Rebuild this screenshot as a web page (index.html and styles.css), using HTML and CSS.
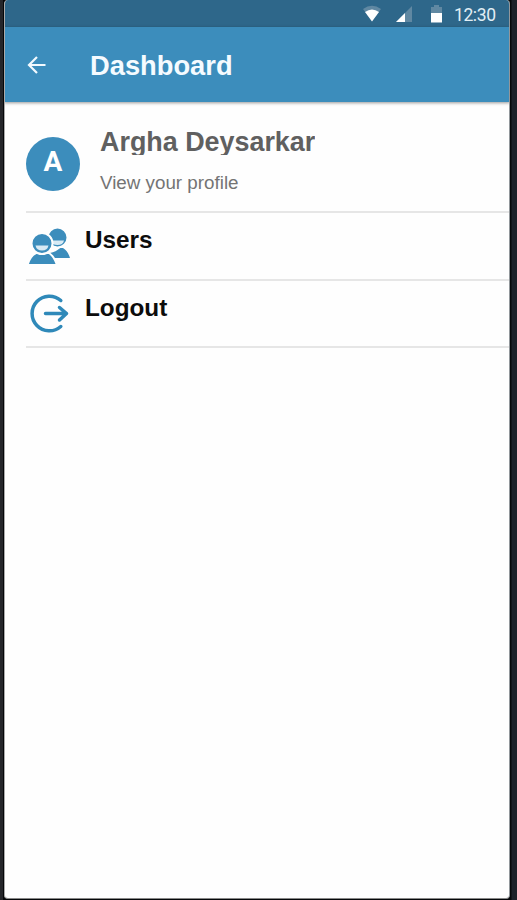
FILE: index.html
```html
<!DOCTYPE html>
<html lang="en">
<head>
<meta charset="utf-8">
<title>Dashboard</title>
<link rel="stylesheet" href="styles.css">
</head>
<body>
<div class="phone">
  <div class="status">
    <svg class="signals" width="84" height="27" viewBox="0 0 84 27">
      <path class="dim" d="M3 9Q12 2.500 21 9L12 21Z"/>
      <path class="lit" d="M5 12Q12 7 19 12L12 21.500Z"/>
      <path class="dim" d="M36 22L52 6V22Z"/>
      <path class="lit" d="M36 22L45 13V22Z"/>
      <path class="dim" d="M71 13V7H74V5H79V7H82V13Z"/>
      <path class="lit" d="M71 13H82V22.500H71Z"/>
    </svg>
    <span class="clock">12:30</span>
  </div>
  <header class="appbar">
    <svg class="back" width="20" height="20" viewBox="0 0 20 20"><path d="M18.500 10H2.500M10 2L2 10L10 18"/></svg>
    <h1 class="title">Dashboard</h1>
  </header>
  <main class="list">
    <section class="profile">
      <div class="avatar">A</div>
      <div class="who">
        <h2 class="name">Argha Deysarkar</h2>
        <p class="hint">View your profile</p>
      </div>
    </section>
    <div class="item">
      <svg class="icon" width="48" height="48" viewBox="0 0 48 48">
        <path class="fill" d="M24 39V34Q30 33 34 29H37Q42 32 44 39Z"/>
        <circle class="person" cx="31.500" cy="18.500" r="10"/>
        <path class="smile" d="M24 21.500H38Q37 26 31.500 26Q26 26 24 21.500Z"/>
        <path class="person" d="M1.500 46Q4 37 10 34H23Q28 37 31 46Z"/>
        <circle class="person" cx="16" cy="24.500" r="10.500"/>
        <path class="smile" d="M9.500 26.500H22.500Q21.500 31.500 16 31.500Q10.500 31.500 9.500 26.500Z"/>
      </svg>
      <span class="label">Users</span>
    </div>
    <div class="item">
      <svg class="icon" width="48" height="48" viewBox="0 0 48 48">
        <path class="ring" d="M34.800 13.500A17.300 17.300 0 1 0 34.800 39.500"/>
        <path class="arrow" d="M19.500 26.500H40.500M33.500 20.500L40.500 26.500L33.500 33"/>
      </svg>
      <span class="label">Logout</span>
    </div>
  </main>
</div>
</body>
</html>
```

FILE: styles.css
```css
* { box-sizing: border-box; }
body {
  margin: 0;
  height: 900px;
  padding: 0 7px 1px 4px;
  overflow: hidden;
  background: linear-gradient(90deg, #25262a 0 3px, #050709 3px 511px, #1d2129 512px);
  font-family: "Liberation Sans", Arial, sans-serif;
}
.phone {
  height: 899px;
  border-right: 1px solid #92979b;
  border-bottom: 1px solid #888;
  border-left: 1px solid #aaa;
  border-radius: 4px;
  overflow: hidden;
  background: #fefefe;
}
.status {
  height: 27px;
  margin: 0 -1px;
  padding-right: 15px;
  display: flex;
  justify-content: flex-end;
  background: #2e678a;
}
.signals { margin-right: 10px; }
.dim { fill: #6088a2; }
.lit { fill: #fff; }
.clock {
  font: 400 17.5px/30px Roboto, sans-serif;
  color: #e1eef5;
  width: 41px;
  white-space: nowrap;
  letter-spacing: -.4px;
}
.appbar {
  position: relative;
  height: 75px;
  margin: 0 -1px;
  padding-left: 23px;
  display: flex;
  align-items: center;
  background: #3c8dbc;
  box-shadow: 0 1px 3px rgba(0, 0, 0, .4);
}
.back { margin-top: 1px; fill: none; stroke: #f2faff; stroke-width: 2.2; }
.title {
  margin: 2px 0 0 43px;
  font-size: 27.3px;
  line-height: 32px;
  color: #f5fbff;
}
.list { margin-left: 21px; }
.profile {
  height: 111px;
  display: flex;
  border-bottom: 2px solid #e6e6e6;
}
.avatar {
  width: 54px;
  height: 54px;
  margin-top: 34.5px;
  border-radius: 50%;
  background: #3c8dbc;
  color: #fff;
  font: 700 28px/50px Roboto, sans-serif;
  text-align: center;
}
.who { margin: 25px 0 0 20px; }
.name {
  margin: 0;
  height: 28px;
  overflow: hidden;
  font-size: 26.9px;
  line-height: 31px;
  color: #606060;
}
.hint {
  margin: 16px 0 0;
  font-size: 18.8px;
  line-height: 24px;
  color: #747474;
}
.item {
  height: 68px;
  display: flex;
  border-bottom: 2px solid #e6e6e6;
}
.item:last-child { height: 67px; }
.icon { margin-top: 6px; flex: none; }
.fill { fill: #3c8dbc; }
.person { fill: #3c8dbc; stroke: #fefefe; stroke-width: 2; }
.smile { fill: #d8eaf4; }
.ring, .arrow {
  fill: none;
  stroke: #2f89b9;
  stroke-width: 3.5;
  stroke-linecap: round;
  stroke-linejoin: round;
}
.label {
  margin: 13px 0 0 11px;
  font-size: 24.3px;
  line-height: 28px;
  font-weight: bold;
  color: #0c0c0c;
}
```
